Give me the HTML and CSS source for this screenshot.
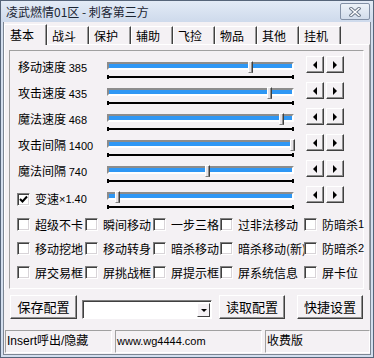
FILE: index.html
```html
<!DOCTYPE html>
<html lang="zh">
<head>
    <meta charset="UTF-8">
    <title>凌武燃情01区 - 刺客第三方</title>
    <link rel="stylesheet" href="styles.css">
</head>
<body>
    <div class="window">
        <div class="titlebar">
            <span class="title">凌武燃情01区 - 刺客第三方</span>
            <span class="close">
                <svg width="12" height="10" viewBox="0 0 12 10">
                    <path d="M2 1.5 L10 8.5 M10 1.5 L2 8.5" stroke="#6f7b8c" stroke-width="3.4" stroke-linecap="square"/>
                    <path d="M2 1.5 L10 8.5 M10 1.5 L2 8.5" stroke="#ffffff" stroke-width="1.4" stroke-linecap="square"/>
                </svg>
            </span>
        </div>
        <div class="client">
            <div class="tabs">
                <div class="tab active">基本</div>
                <div class="tab">战斗</div>
                <div class="tab">保护</div>
                <div class="tab">辅助</div>
                <div class="tab">飞捡</div>
                <div class="tab">物品</div>
                <div class="tab">其他</div>
                <div class="tab">挂机</div>
            </div>
            <div class="page">
                <div class="group">
                    <div class="slider-row">
                        <div class="label">移动速度 <span class="num">385</span></div>
                        <div class="slider"><div class="track"></div><div class="thumb" style="left: 141px"></div><div class="ticks"></div></div>
                        <div class="spin"><span class="arrow left"></span><span class="arrow right"></span></div>
                    </div>
                    <div class="slider-row">
                        <div class="label">攻击速度 <span class="num">435</span></div>
                        <div class="slider"><div class="track"></div><div class="thumb" style="left: 160px"></div><div class="ticks"></div></div>
                        <div class="spin"><span class="arrow left"></span><span class="arrow right"></span></div>
                    </div>
                    <div class="slider-row">
                        <div class="label">魔法速度 <span class="num">468</span></div>
                        <div class="slider"><div class="track"></div><div class="thumb" style="left: 172px"></div><div class="ticks"></div></div>
                        <div class="spin"><span class="arrow left"></span><span class="arrow right"></span></div>
                    </div>
                    <div class="slider-row">
                        <div class="label">攻击间隔 <span class="num">1400</span></div>
                        <div class="slider"><div class="track"></div><div class="thumb" style="left: 183px"></div><div class="ticks"></div></div>
                        <div class="spin"><span class="arrow left"></span><span class="arrow right"></span></div>
                    </div>
                    <div class="slider-row">
                        <div class="label">魔法间隔 <span class="num">740</span></div>
                        <div class="slider"><div class="track"></div><div class="thumb" style="left: 98px"></div><div class="ticks"></div></div>
                        <div class="spin"><span class="arrow left"></span><span class="arrow right"></span></div>
                    </div>
                    <div class="slider-row">
                        <div class="label check-label"><span class="box checked"><svg width="9" height="9" viewBox="0 0 9 9"><path d="M1 4 L3.5 6.5 L8 1.5" fill="none" stroke="#000" stroke-width="2"/></svg></span>变速 <span class="num">×1.40</span></div>
                        <div class="slider"><div class="track"></div><div class="thumb" style="left: 8px"></div><div class="ticks"></div></div>
                        <div class="spin"><span class="arrow left"></span><span class="arrow right"></span></div>
                    </div>
                    <div class="checks">
                        <div class="check"><span class="box"></span>超级不卡</div>
                        <div class="check"><span class="box"></span>瞬间移动</div>
                        <div class="check"><span class="box"></span>一步三格</div>
                        <div class="check"><span class="box"></span>过非法移动</div>
                        <div class="check"><span class="box"></span>防暗杀<span class="digit">1</span></div>
                        <div class="check"><span class="box"></span>移动挖地</div>
                        <div class="check"><span class="box"></span>移动转身</div>
                        <div class="check"><span class="box"></span>暗杀移动</div>
                        <div class="check"><span class="box"></span>暗杀移动(新)</div>
                        <div class="check"><span class="box"></span>防暗杀<span class="digit">2</span></div>
                        <div class="check"><span class="box"></span>屏交易框</div>
                        <div class="check"><span class="box"></span>屏挑战框</div>
                        <div class="check"><span class="box"></span>屏提示框</div>
                        <div class="check"><span class="box"></span>屏系统信息</div>
                        <div class="check"><span class="box"></span>屏卡位</div>
                    </div>
                </div>
            </div>
            <div class="actions">
                <div class="button save">保存配置</div>
                <div class="combo"><span class="drop"></span></div>
                <div class="button load">读取配置</div>
                <div class="button quick">快捷设置</div>
            </div>
            <div class="statusbar">
                <div class="pane first">Insert呼出/隐藏</div>
                <div class="pane second">www.wg4444.com</div>
                <div class="pane third">收费版</div>
            </div>
        </div>
    </div>
</body>
</html>
```

FILE: styles.css
```css
body {
    margin: 0;
    padding: 0;
    font-family: "Noto Sans CJK SC", "Liberation Sans", sans-serif;
    font-size: 12px;
    color: #000;
    background: #fff;
}

.window {
    width: 374px;
    height: 358px;
    box-sizing: border-box;
    border: 1px solid #56657a;
    background: #d3deee;
    padding: 0 2px 2px;
}

.titlebar {
    height: 21px;
    display: flex;
    align-items: center;
    justify-content: space-between;
    padding: 0 0 0 5px;
    background: linear-gradient(to bottom, #e3ebf6, #cedaec);
    margin: 0 -2px;
    padding-right: 3px;
}

.title {
    line-height: 21px;
    color: #1b2533;
}

.close {
    width: 28px;
    height: 15px;
    border: 1px solid #8391a6;
    border-radius: 2px;
    background: linear-gradient(to bottom, #eef3f9, #d2ddeb);
    display: flex;
    align-items: center;
    justify-content: center;
}

.client {
    height: 333px;
    box-sizing: border-box;
    border: 1px solid #7c8694;
    border-top: none;
    background: #f4f1f4;
}

/* tab strip */
.tabs {
    height: 22px;
    display: flex;
    align-items: flex-start;
    position: relative;
    z-index: 1;
}

.tab {
    width: 42px;
    height: 18px;
    margin-top: 4px;
    box-sizing: border-box;
    padding-left: 4px;
    line-height: 17px;
    border-left: 1px solid #fff;
    border-top: 1px solid #fff;
    border-right: 1px solid #404040;
    box-shadow: inset -1px 0 #9a9a9a;
}

.tab.active {
    width: 43px;
    height: 21px;
    margin-top: 2px;
    padding-left: 5px;
    line-height: 20px;
    background: #f4f1f4;
}

.page {
    height: 246px;
    box-sizing: border-box;
    border-top: 1px solid #fff;
    border-left: 1px solid #fff;
    border-right: 1px solid #a0a0a0;
    padding-top: 5px;
}

.group {
    width: 355px;
    height: 239px;
    margin-left: 4px;
    box-sizing: border-box;
    border-top: 1px solid #a0a0a0;
    border-left: 1px solid #a0a0a0;
    border-right: 1px solid #fff;
    border-bottom: 1px solid #fff;
    padding: 5px 0 0 8px;
}

/* slider rows */
.slider-row {
    height: 26px;
    display: grid;
    grid-template-columns: 89px 187px 50px;
    column-gap: 0;
}

.label {
    line-height: 22px;
    white-space: nowrap;
}

.num {
    font-family: "Liberation Sans", sans-serif;
    font-size: 11px;
}

.check-label {
    display: flex;
    align-items: center;
    margin-left: -1px;
}

.slider {
    position: relative;
}

.track {
    position: absolute;
    left: 0;
    right: 0;
    top: 6px;
    height: 8px;
    box-sizing: border-box;
    border-top: 2px solid #8c8c8c;
    border-left: 2px solid #8c8c8c;
    border-bottom: 2px solid #fff;
    border-right: 2px solid #fff;
    background: #2f97f4;
}

.thumb {
    position: absolute;
    top: 5px;
    width: 5px;
    height: 12px;
    box-sizing: border-box;
    border-left: 1px solid #fff;
    border-top: 1px solid #fff;
    border-right: 1px solid #404040;
    border-bottom: 1px solid #808080;
    background: #e6e2e6;
    box-shadow: inset -1px 0 #909090;
}

.ticks {
    position: absolute;
    left: 1px;
    right: 1px;
    top: 20px;
    height: 2px;
    background: #000;
}

.ticks::before,
.ticks::after {
    content: "";
    position: absolute;
    top: -1px;
    width: 2px;
    height: 4px;
    background: #000;
}

.ticks::before {
    left: -1px;
}

.ticks::after {
    right: -1px;
}

.spin {
    display: flex;
    gap: 2px;
    margin-left: 12px;
}

.arrow {
    width: 24px;
    height: 17px;
    box-sizing: border-box;
    border-top: 1px solid #fff;
    border-left: 1px solid #fff;
    border-right: 1px solid #404040;
    border-bottom: 1px solid #404040;
    box-shadow: inset -1px -1px #909090;
    display: flex;
    align-items: center;
    justify-content: center;
}

.arrow::before {
    content: "";
    border-top: 4px solid transparent;
    border-bottom: 4px solid transparent;
}

.arrow.left::before {
    border-right: 4px solid #000;
}

.arrow.right::before {
    border-left: 4px solid #000;
}

/* checkboxes */
.checks {
    display: grid;
    grid-template-columns: 68px 68px 67px 84px 1fr;
    grid-auto-rows: 24px;
    margin-left: -1px;
}

.check {
    display: flex;
    align-items: center;
    white-space: nowrap;
}

.box {
    width: 13px;
    height: 13px;
    box-sizing: border-box;
    flex: none;
    border-top: 1px solid #808080;
    border-left: 1px solid #808080;
    border-right: 1px solid #fff;
    border-bottom: 1px solid #fff;
    box-shadow: inset 1px 1px #404040, inset -1px -1px #d8d4d8;
    background: #fff;
    margin-right: 5px;
    display: flex;
    align-items: center;
    justify-content: center;
}

.digit {
    font-family: "Liberation Sans", sans-serif;
    font-size: 11px;
}

/* bottom buttons */
.actions {
    height: 40px;
    display: flex;
    align-items: flex-start;
    padding: 5px 0 0 6px;
    box-sizing: border-box;
}

.button {
    width: 67px;
    height: 24px;
    box-sizing: border-box;
    border-top: 1px solid #fff;
    border-left: 1px solid #fff;
    border-right: 1px solid #404040;
    border-bottom: 1px solid #404040;
    box-shadow: inset -1px -1px #909090;
    text-align: center;
    line-height: 22px;
    font-size: 13px;
}

.combo {
    width: 130px;
    height: 19px;
    margin: 5px 0 0 5px;
    box-sizing: border-box;
    border-top: 1px solid #808080;
    border-left: 1px solid #808080;
    border-right: 1px solid #fff;
    border-bottom: 1px solid #fff;
    box-shadow: inset 1px 1px #404040;
    background: #fff;
    display: flex;
    justify-content: flex-end;
    padding: 2px 1px 1px 0;
}

.drop {
    width: 13px;
    height: 14px;
    box-sizing: border-box;
    border-top: 1px solid #fff;
    border-left: 1px solid #fff;
    border-right: 1px solid #404040;
    border-bottom: 1px solid #404040;
    background: #f4f1f4;
    display: flex;
    align-items: center;
    justify-content: center;
}

.drop::before {
    content: "";
    border-left: 3px solid transparent;
    border-right: 3px solid transparent;
    border-top: 3px solid #000;
}

.button.load {
    width: 66px;
    margin-left: 7px;
}

.button.quick {
    width: 66px;
    margin-left: 12px;
}

/* status bar */
.statusbar {
    height: 24px;
    display: flex;
    gap: 3px;
    padding-left: 1px;
    font-family: "Liberation Sans", "Noto Sans CJK SC", sans-serif;
}

.pane {
    height: 23px;
    box-sizing: border-box;
    border-top: 1px solid #a0a0a0;
    border-left: 1px solid #a0a0a0;
    border-right: 1px solid #fff;
    border-bottom: 1px solid #fff;
    line-height: 21px;
    padding-left: 1px;
    white-space: nowrap;
    overflow: hidden;
}

.pane.first {
    width: 107px;
}

.pane.second {
    width: 147px;
    font-size: 11px;
}

.pane.third {
    flex: 1;
}
```
